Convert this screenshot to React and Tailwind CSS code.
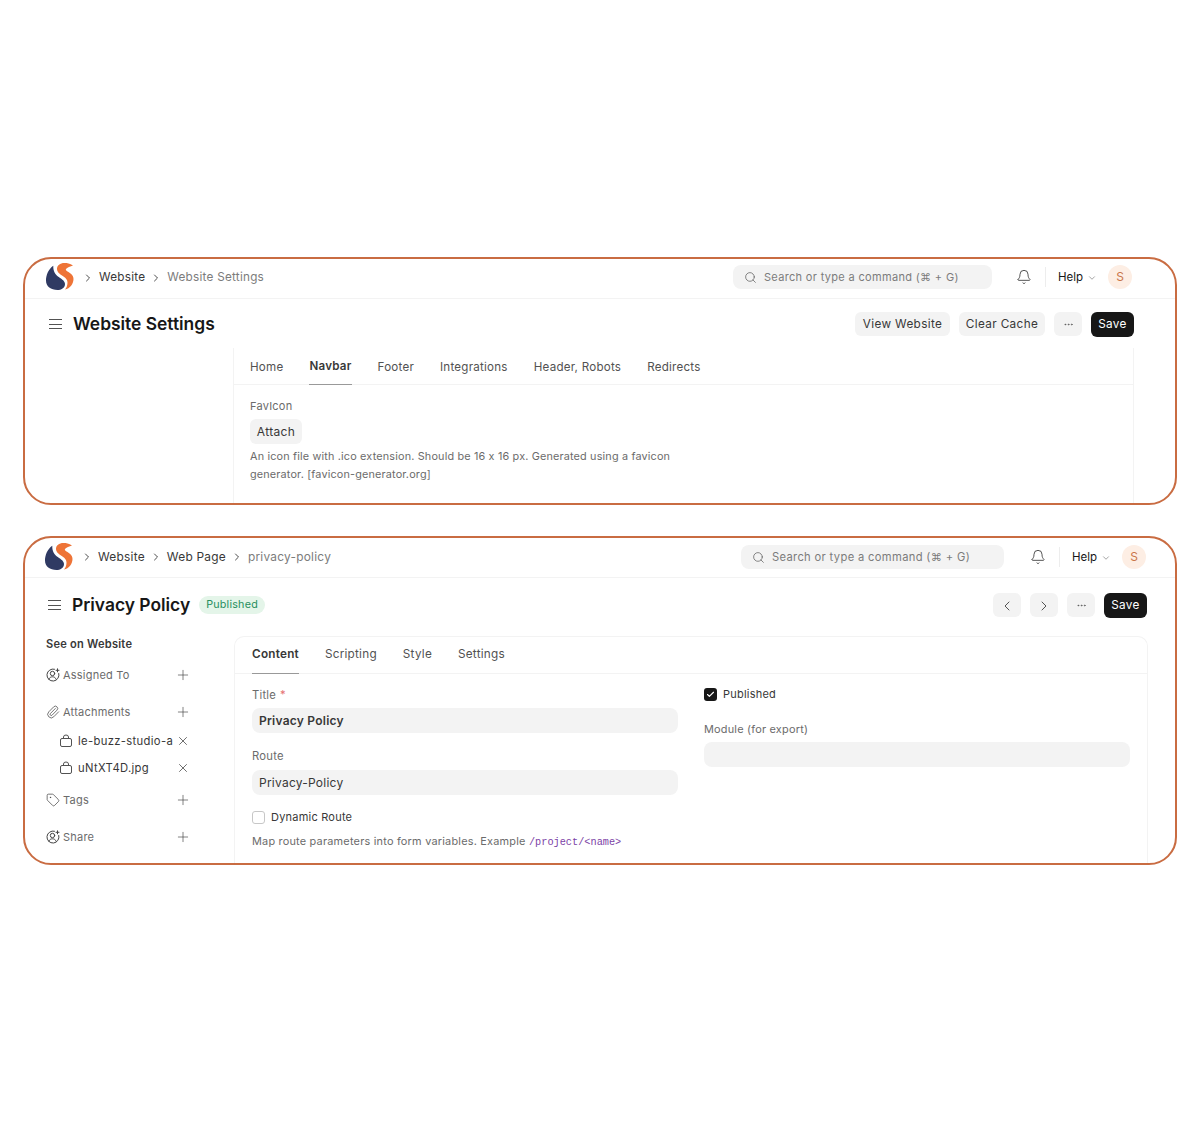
import React from 'react'
import { Bell, ChevronDown, ChevronLeft, ChevronRight, Check, Ellipsis, Paperclip, Plus, Search, Tag, X } from 'lucide-react'

function Logo() {
  return (
    <svg width="28" height="28" viewBox="0 0 28 28" className="shrink-0">
      <path fill="#2f3a63" d="M7.300 2.700C2.500 6 0 12 0 17.500 0 23.500 5 27 11.500 27c3.500 0 7.500-2 7.500-6 0-3.500-4.500-5.500-7-7.500-2.500-2-5-5.500-4.700-10.800Z" />
      <path fill="#ee7437" d="M27 2.500C24 .5 21 0 18.500 0 14 0 11 2.500 11 6c0 3.500 3.500 5.500 6.500 7.500 2.500 1.500 4 3.500 4 6 0 2.500-.7 5-2.500 7 5-1 8.500-5.500 8.500-10.500 0-4-3.500-6-6-7.500-1.500-1-2-1.700-1.500-2.500 1-1.500 4.500-2.500 7-3.500Z" />
    </svg>
  )
}

function UserPlus() {
  return (
    <svg width="14" height="14" viewBox="0 0 14 14" fill="none" stroke="#444" strokeWidth="1" strokeLinecap="round" className="shrink-0">
      <path d="M8.500 1.200A6 6 0 1 0 12.800 5.500" />
      <circle cx="6.500" cy="5.500" r="2.200" />
      <path d="M2.800 11.300C3.500 9.500 5 8.800 6.500 8.800s3 .7 3.700 2.500" />
      <path d="M11.500 .8v3M10 2.300h3" />
    </svg>
  )
}

function FileIcon() {
  return (
    <svg width="14" height="14" viewBox="0 0 14 14" fill="none" stroke="#525252" strokeWidth="1" className="shrink-0">
      <rect x="1.500" y="4.500" width="11" height="8" rx="1.500" />
      <path d="M4.500 4.500V3a2.500 2 0 0 1 5 0v1.500" />
    </svg>
  )
}

function Hamburger() {
  return (
    <div className="flex flex-col gap-[3.500px] w-[13px] shrink-0">
      <div className="h-px bg-[#525252]" />
      <div className="h-px bg-[#525252]" />
      <div className="h-px bg-[#525252]" />
    </div>
  )
}

function Crumb({ children, last }) {
  return (
    <>
      <ChevronRight size={12} strokeWidth={1.750} className="text-[#333] shrink-0" />
      <span className={last ? 'text-[#7c7c7c]' : 'text-[#383838]'}>{children}</span>
    </>
  )
}

function TopBar({ crumbs, size, searchSize, searchWidth, searchGap, className }) {
  return (
    <div className={`flex items-center h-[40px] border-b border-[#f3f3f3] ${className}`}>
      <Logo />
      <div className={`flex items-center gap-[5px] ml-[8px] tracking-[0.02em] ${size}`}>
        {crumbs.map((c, i) => (
          <Crumb key={c} last={i === crumbs.length - 1}>{c}</Crumb>
        ))}
      </div>
      <div className={`ml-auto flex items-center gap-[7px] h-[24px] ${searchWidth} pl-[11px] rounded-[8px] bg-[#f3f3f3] tracking-[0.03em] text-[#7c7c7c] ${searchSize}`}>
        <Search size={13} strokeWidth={1.250} className="text-[#525252]" />
        <span>Search or type a command (⌘ + G)</span>
      </div>
      <Bell size={16} strokeWidth={1.250} className={`text-[#333] ${searchGap} shrink-0`} />
      <div className="w-px h-[20px] bg-[#ededed] ml-[13px]" />
      <div className="flex items-center gap-[4px] ml-[12px] mt-[1px] text-[11.500px] text-[#171717]">
        Help <ChevronDown size={10} strokeWidth={1.250} className="text-[#525252]" />
      </div>
      <div className="flex items-center justify-center w-[24px] h-[24px] ml-[11px] rounded-full bg-[#fdeee4] text-[12px] text-[#c9764a]">S</div>
    </div>
  )
}

function Btn({ children, className = '' }) {
  return (
    <div className={`flex items-center justify-center h-[24px] pt-[1px] rounded-[6px] bg-[#f3f3f3] text-[11.750px] tracking-[0.03em] text-[#383838] ${className}`}>
      {children}
    </div>
  )
}

function SaveBtn() {
  return <div className="flex items-center justify-center h-[25px] w-[43px] pt-[1px] rounded-[6px] bg-[#171717] text-[11.750px] tracking-[0.03em] text-white">Save</div>
}

function MoreBtn() {
  return (
    <Btn className="w-[28px]">
      <Ellipsis size={11} strokeWidth={1.500} className="text-[#525252]" />
    </Btn>
  )
}

function Tabs({ tabs, active, className = '', pad = '' }) {
  return (
    <div className={`flex h-[37px] border-b border-[#f3f3f3] tracking-[0.02em] ${className}`}>
      {tabs.map((t) => (
        <div
          key={t}
          className={t === active
            ? `flex items-center h-[37px] border-b border-[#999] font-semibold text-[#383838] ${pad}`
            : `flex items-center h-[37px] text-[#525252] ${pad}`}
        >
          {t}
        </div>
      ))}
    </div>
  )
}

function SideRow({ icon, label, className = '' }) {
  return (
    <div className={`flex items-center h-[16px] ${className}`}>
      <div className="flex items-center gap-[3px] w-[129px] text-[11px] tracking-[0.02em] text-[#6b6b6b]">
        {icon}
        {label}
      </div>
      <Plus size={16} strokeWidth={1} className="text-[#444]" />
    </div>
  )
}

function FileRow({ name, className = '' }) {
  return (
    <div className={`flex items-center h-[16px] pl-[13px] ${className}`}>
      <div className="flex items-center gap-[5px] w-[117px] text-[11.250px] tracking-[0.03em] text-[#383838] whitespace-nowrap">
        <FileIcon />
        {name}
      </div>
      <X size={14} strokeWidth={1.250} className="text-[#383838]" />
    </div>
  )
}

function Field({ label, required, value, bold, gap = 'mt-[5px]' }) {
  return (
    <div>
      <div className="text-[11.250px] leading-[16px] tracking-[0.02em] text-[#6b6b6b]">
        {label}
        {required && <span className="text-[#e57373] ml-[4px]">*</span>}
      </div>
      <div className={`flex items-center h-[25px] ${gap} pl-[7px] rounded-[8px] bg-[#f3f3f3] text-[12px] tracking-[0.02em] text-[#383838] ${bold ? 'font-semibold' : ''}`}>
        {value}
      </div>
    </div>
  )
}

function WebsiteSettings() {
  return (
    <div className="h-[248px] rounded-[28px] border-2 border-[#c96c42] overflow-hidden bg-white">
      <TopBar
        crumbs={['Website', 'Website Settings']}
        size="text-[11.750px] mt-[1px]"
        searchSize="text-[11px]"
        searchWidth="w-[259px]"
        searchGap="ml-[24px]"
        className="pl-[21px] pr-[43px] pb-[3px]"
      />
      <div className="flex items-center h-[48px] pl-[24px] pr-[41px] mt-[1px]">
        <Hamburger />
        <div className="ml-[11px] text-[17.400px] font-semibold text-[#171717]">Website Settings</div>
        <div className="ml-auto flex items-center gap-[9px]">
          <Btn className="w-[95px]">View Website</Btn>
          <Btn className="w-[86px]">Clear Cache</Btn>
          <MoreBtn />
          <SaveBtn />
        </div>
      </div>
      <div className="ml-[208px] mr-[41px] h-[160px] border-x border-[#f3f3f3]">
        <Tabs
          tabs={['Home', 'Navbar', 'Footer', 'Integrations', 'Header, Robots', 'Redirects']}
          active="Navbar"
          className="gap-[26px] pl-[16px] text-[11.600px]"
          pad="pt-[2px]"
        />
        <div className="pl-[16px] pt-[13px]">
          <div className="text-[11px] leading-[16px] tracking-[0.02em] text-[#6b6b6b]">FavIcon</div>
          <Btn className="w-[52px] h-[25px] mt-[5px] text-[12px]">Attach</Btn>
          <div className="mt-[3px] w-[440px] text-[10.850px] leading-[18px] tracking-[0.015em] text-[#6b6b6b]">
            An icon file with .ico extension. Should be 16 x 16 px. Generated using a favicon generator. [favicon-generator.org]
          </div>
        </div>
      </div>
    </div>
  )
}

function PrivacyPolicy() {
  return (
    <div className="h-[329px] mt-[31px] rounded-[28px] border-2 border-[#c96c42] overflow-hidden bg-white">
      <TopBar
        crumbs={['Website', 'Web Page', 'privacy-policy']}
        size="text-[11.900px]"
        searchSize="text-[11.200px]"
        searchWidth="w-[263px]"
        searchGap="ml-[26px]"
        className="pl-[20px] pr-[29px] pb-[1px]"
      />
      <div className="flex items-center h-[58px] pl-[23px] pr-[28px] pb-[4px]">
        <Hamburger />
        <div className="ml-[11px] text-[17.400px] font-semibold text-[#171717]">Privacy Policy</div>
        <div className="ml-[9px] flex items-center h-[18px] px-[7px] rounded-full bg-[#e4f5e9] text-[10.750px] tracking-[0.02em] text-[#278f5e]">Published</div>
        <div className="ml-auto flex items-center gap-[9px]">
          <Btn className="w-[28px]"><ChevronLeft size={16} strokeWidth={1.250} className="text-[#333]" /></Btn>
          <Btn className="w-[28px]"><ChevronRight size={16} strokeWidth={1.250} className="text-[#333]" /></Btn>
          <MoreBtn />
          <SaveBtn />
        </div>
      </div>
      <div className="flex">
        <div className="w-[209px] shrink-0 pl-[21px]">
          <div className="text-[11.100px] leading-[16px] font-semibold tracking-[0.02em] text-[#383838]">See on Website</div>
          <SideRow icon={<UserPlus />} label="Assigned To" className="mt-[15px]" />
          <SideRow icon={<Paperclip size={14} strokeWidth={1.250} className="text-[#444] shrink-0" />} label="Attachments" className="mt-[21px]" />
          <FileRow name="le-buzz-studio-a" className="mt-[13px]" />
          <FileRow name="uNtXT4D.jpg" className="mt-[11px]" />
          <SideRow icon={<Tag size={14} strokeWidth={1.250} className="text-[#444] shrink-0" />} label="Tags" className="mt-[16px]" />
          <SideRow icon={<UserPlus />} label="Share" className="mt-[21px]" />
        </div>
        <div className="w-[914px] h-[240px] border border-b-0 border-[#f3f3f3] rounded-t-[10px]">
          <Tabs
            tabs={['Content', 'Scripting', 'Style', 'Settings']}
            active="Content"
            className="gap-[26px] pl-[17px] text-[11.750px]"
            pad="pb-[1px]"
          />
          <div className="grid grid-cols-2 gap-x-[26px] pl-[17px] pr-[17px] pt-[13px]">
            <div>
              <Field label="Title" required value="Privacy Policy" bold />
              <div className="mt-[15px]"><Field label="Route" value="Privacy-Policy" gap="mt-[6px]" /></div>
              <div className="flex items-center gap-[6px] mt-[14px] text-[11px] tracking-[0.02em] text-[#383838]">
                <div className="w-[13px] h-[13px] rounded-[3px] border border-[#c7c7c7]" />
                Dynamic Route
              </div>
              <div className="mt-[7px] text-[10.900px] leading-[16px] tracking-[0.02em] text-[#6b6b6b] whitespace-nowrap">
                Map route parameters into form variables. Example <code className="[font-family:'Liberation_Mono',monospace] text-[10.250px] tracking-normal text-[#7c3fa6]">/project/&lt;name&gt;</code>
              </div>
            </div>
            <div className="-mt-[1px]">
              <div className="flex items-center gap-[6px] h-[16px] text-[11px] tracking-[0.02em] text-[#383838]">
                <div className="flex items-center justify-center w-[13px] h-[13px] rounded-[3px] bg-[#171717]">
                  <Check size={9} strokeWidth={3} className="text-white" />
                </div>
                Published
              </div>
              <div className="mt-[19px] text-[10.900px] leading-[16px] tracking-[0.02em] text-[#6b6b6b]">Module (for export)</div>
              <div className="h-[25px] mt-[5px] rounded-[8px] bg-[#f3f3f3]" />
            </div>
          </div>
        </div>
      </div>
    </div>
  )
}

export default function App() {
  return (
    <div className="min-h-[1122px] bg-white px-[23px] pt-[257px] [font-family:Inter,sans-serif]">
      <WebsiteSettings />
      <PrivacyPolicy />
    </div>
  )
}
